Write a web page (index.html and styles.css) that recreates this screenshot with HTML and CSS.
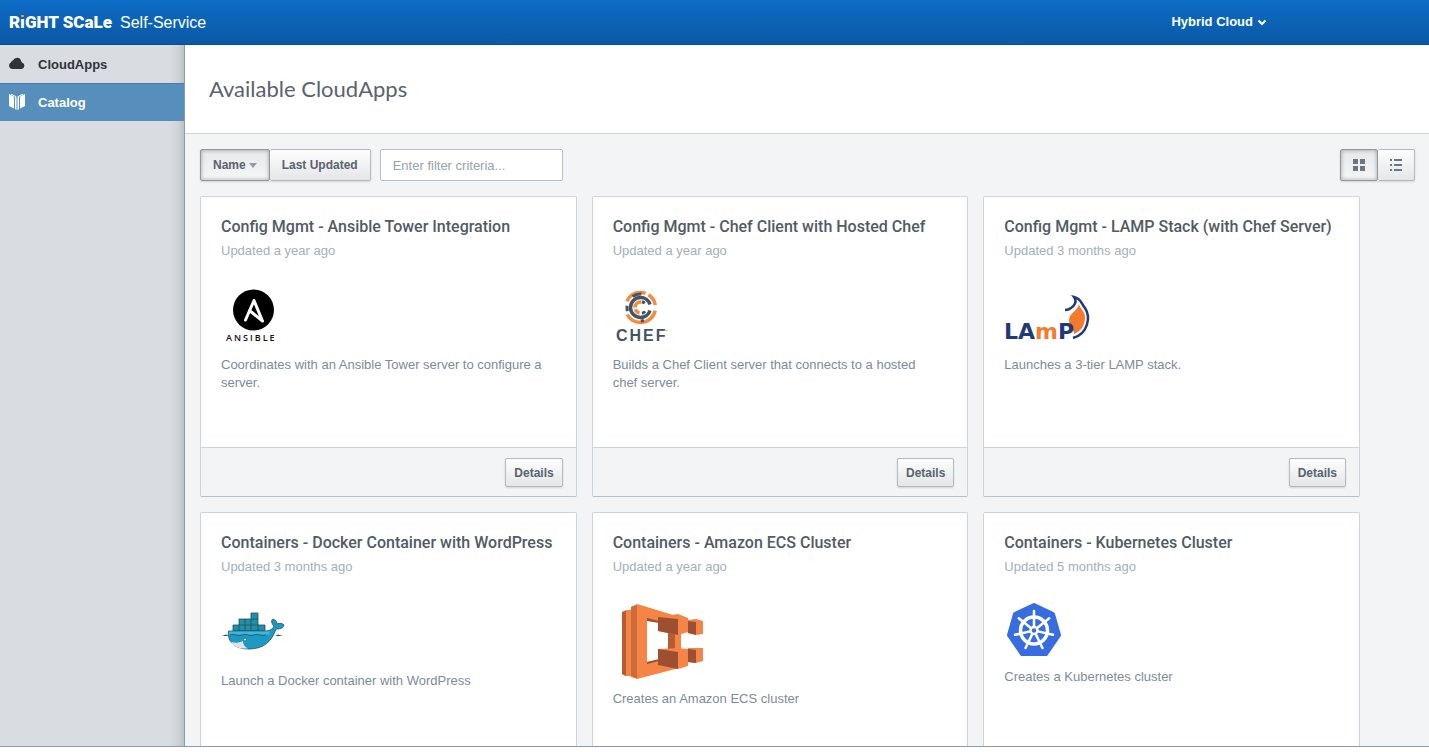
FILE: index.html
```html
<!DOCTYPE html>
<html lang="en">
<head>
<meta charset="utf-8">
<title>RightScale Self-Service</title>
<link rel="stylesheet" href="styles.css">
</head>
<body>
<div class="app">
  <header class="topbar">
    <a class="brand" href="#"><span class="brand-name">R<span class="brand-i">ı</span>GHT SCaLe</span><span class="brand-product">Self-Service</span></a>
    <button class="account" type="button">Hybrid Cloud
      <svg width="10" height="7" viewBox="0 0 10 7" aria-hidden="true"><path d="M1.500 1.500L5 5l3.500-3.500" fill="none" stroke="#fff" stroke-width="2"/></svg>
    </button>
  </header>
  <div class="workspace">
    <nav class="sidebar">
      <a class="nav-item" href="#">
        <svg width="16" height="16" viewBox="0 1 16 16" aria-hidden="true"><path d="M3.500 14A3.500 3.500 0 0 1 2.200 7.300Q2.200 5.600 4.200 5.300A4.100 4.100 0 0 1 12 5.800Q12.400 7.200 13 7.400A3.400 3.400 0 0 1 12.600 14z" fill="#2e3438"/></svg>
        <span>CloudApps</span>
      </a>
      <a class="nav-item current" href="#" aria-current="page">
        <svg width="16" height="16" viewBox="0 1 16 16" aria-hidden="true"><path d="M0 1l5 2.500v12L0 13zM6 4l1.500.800V17L6 16zM8.500 4.800L10 4v12l-1.500 1zM11 3.500L16 1v12l-5 2.500z" fill="#fff"/><path d="M2 1l5.500 3M14 1L8.500 4" stroke="#fff" stroke-width="1"/></svg>
        <span>Catalog</span>
      </a>
    </nav>
    <main class="main">
      <div class="page-head"><h1>Available CloudApps</h1></div>
      <div class="toolbar">
        <div class="group">
          <button class="btn sort pressed" type="button">Name <svg width="8" height="5" viewBox="0 0 8 5" aria-hidden="true"><path d="M0 0h8L4 5z" fill="#929ba4"/></svg></button>
          <button class="btn sort" type="button">Last Updated</button>
        </div>
        <input class="filter" type="text" placeholder="Enter filter criteria..." aria-label="Filter criteria">
        <div class="group views">
          <button class="btn view pressed" type="button" aria-label="Grid view"><svg width="12" height="12" viewBox="0 0 12 12"><path d="M0 0h5v5H0zM7 0h5v5H7zM0 7h5v5H0zM7 7h5v5H7z" fill="#70787f"/></svg></button>
          <button class="btn view" type="button" aria-label="List view"><svg width="12" height="12" viewBox="0 0 12 12"><path d="M0 0h2v2H0zM4 0h8v2H4zM0 5h2v2H0zM4 5h8v2H4zM0 10h2v2H0zM4 10h8v2H4z" fill="#70787f"/></svg></button>
        </div>
      </div>
      <div class="cards">
        <article class="card">
          <div class="card-body">
            <h2>Config Mgmt - Ansible Tower Integration</h2>
            <p class="updated">Updated a year ago</p>
            <svg class="logo" width="64" height="64" viewBox="0 0 64 64" role="img" aria-label="Ansible">
              <circle cx="32.500" cy="28" r="20.500" fill="#000"/>
              <path d="M24.500 38L33 18.500l8.500 20.500L28.500 28.500" fill="none" stroke="#fff" stroke-width="3" stroke-linejoin="round" stroke-linecap="round"/>
              <text class="ansible-word" x="5" y="59">ANSIBLE</text>
            </svg>
            <p class="desc">Coordinates with an Ansible Tower server to configure a server.</p>
          </div>
          <footer class="card-foot"><button class="btn details" type="button">Details</button></footer>
        </article>
        <article class="card">
          <div class="card-body">
            <h2>Config Mgmt - Chef Client with Hosted Chef</h2>
            <p class="updated">Updated a year ago</p>
            <svg class="logo" width="64" height="64" viewBox="0 0 64 64" role="img" aria-label="Chef">
              <g fill="none">
                <circle cx="27.500" cy="25.500" r="15" pathLength="360" stroke="#f58b3f" stroke-width="3.500" stroke-dasharray="0 12 140 53 85 12 48 10"/>
                <circle cx="27.500" cy="25.500" r="13.500" pathLength="360" stroke="#435464" stroke-width="3" stroke-dasharray="0 75 14 75 24 46 40 86"/>
                <circle cx="27.500" cy="25.500" r="10" pathLength="360" stroke="#435464" stroke-width="3.500" stroke-dasharray="0 18 324 18"/>
                <circle cx="27.500" cy="25.500" r="5.500" pathLength="360" stroke="#f58b3f" stroke-width="3.500" stroke-dasharray="0 100 60 20 100 80"/>
                <circle cx="27.500" cy="25.500" r="6" pathLength="360" stroke="#435464" stroke-width="3" stroke-dasharray="0 40 35 210 30 45"/>
                <path d="M28 25.500h16" stroke="#fff" stroke-width="4"/>
              </g>
              <text class="chef-word" x="3" y="59">CHEF</text>
              <text class="chef-mark" x="52" y="50">™</text>
            </svg>
            <p class="desc">Builds a Chef Client server that connects to a hosted chef server.</p>
          </div>
          <footer class="card-foot"><button class="btn details" type="button">Details</button></footer>
        </article>
        <article class="card">
          <div class="card-body">
            <h2>Config Mgmt - LAMP Stack (with Chef Server)</h2>
            <p class="updated">Updated 3 months ago</p>
            <svg class="logo" width="90" height="64" viewBox="0 0 90 64" role="img" aria-label="LAMP">
              <path d="M75 22c1 5 6 7 6 13 0 9-4 14-11 17 0-5-5-8-5-14 0-7 8-8 10-16z" fill="#f47a2d"/>
              <path d="M61 28c5 0 14-6 9-13 8 2 7 7 11 11 6 9 3 26-12 30" fill="none" stroke="#203b7b" stroke-width="2.500"/>
              <text class="lamp-word" x="0" y="57">LA<tspan class="lamp-m">m</tspan>P</text>
            </svg>
            <p class="desc">Launches a 3-tier LAMP stack.</p>
          </div>
          <footer class="card-foot"><button class="btn details" type="button">Details</button></footer>
        </article>
        <article class="card">
          <div class="card-body">
            <h2>Containers - Docker Container with WordPress</h2>
            <p class="updated">Updated 3 months ago</p>
            <svg class="logo" width="64" height="64" viewBox="0 1 64 64" role="img" aria-label="Docker">
              <g stroke="#264d5d" stroke-width=".8">
                <path d="M12 34V28h6V22h12V16h7v12h7v6z" fill="#218fa6"/>
                <path d="M18 28v6M24 22v12M30 22v12M37 28v6M18 28h19M30 22h7" fill="none"/>
                <path d="M7.500 34H43c6 0 9-2 10-5-3-3-3-6-1-7 3 1 4 3 4 5 3-1 5-1 7 1-1 4-5 4-8 4C51 44 43 52 28 52 14 52 6 45 7.500 34z" fill="#1c9ac3"/>
              </g>
              <path d="M8 34.500h41l-1 3H8z" fill="#3cb8da"/>
              <path d="M10 45c5 1 8 1 12-1 0 4 2 6 5 7.500C19 52 13 50 10 45z" fill="#d8e6e9"/>
              <path d="M9 38q3-1.500 6 0t6 0 6 0 6 0 6 0 6 0" fill="none" stroke="#25566a" stroke-width=".8"/>
              <path d="M1 39l4-1.500 3 1.500zM54 39l3-1.500 5 1.500z" fill="#25566a"/>
              <circle cx="24" cy="42.500" r="1.500" fill="#e5e7e3" stroke="#264d5d" stroke-width=".7"/>
            </svg>
            <p class="desc">Launch a Docker container with WordPress</p>
          </div>
        </article>
        <article class="card">
          <div class="card-body">
            <h2>Containers - Amazon ECS Cluster</h2>
            <p class="updated">Updated a year ago</p>
            <svg class="logo" width="100" height="82" viewBox="0 0 100 82" role="img" aria-label="Amazon ECS">
              <path d="M9 14l4-2h5v66h-5l-4-2z" fill="#f58546"/><path d="M9 14l4-1v65l-4-2z" fill="#b85a32"/>
              <path d="M18 9l6-3 46 14v12H55v-6L34 21v43l22-4h14v9L24 81l-6-2z" fill="#f58546"/>
              <path d="M18 9l6-2v73l-6-2z" fill="#cf6a3a"/>
              <path d="M34 20l12 3v2l-12-2zM34 64l12-3v2l-12 3z" fill="#9d5031"/>
              <path d="M55 34h13v17H55z" fill="#b85a32"/><path d="M62 35h6v16h-6z" fill="#f58546"/>
              <path d="M45 19l20-3 10 4v14l-10 3-20-4z" fill="#f58546"/><path d="M45 19l20 2v16l-20-4z" fill="#9d5031"/>
              <path d="M75 22l8-1 7 2v13l-7 1-8-2z" fill="#f58546"/><path d="M75 23l8 1v13l-8-2z" fill="#9d5031"/>
              <path d="M45 51l20-1 10 1v17l-10 3-20-4z" fill="#f58546"/><path d="M45 51l20 3v17l-20-4z" fill="#9d5031"/>
              <path d="M75 50h15v13l-7 2-8-1z" fill="#f58546"/><path d="M75 51l8 1v13l-8-1z" fill="#9d5031"/>
            </svg>
            <p class="desc">Creates an Amazon ECS cluster</p>
          </div>
        </article>
        <article class="card">
          <div class="card-body">
            <h2>Containers - Kubernetes Cluster</h2>
            <p class="updated">Updated 5 months ago</p>
            <svg class="logo" width="60" height="60" viewBox="0 1 60 60" role="img" aria-label="Kubernetes">
              <path d="M30 8l19 9 6 21L42 57H18L5 38l6-21z" fill="#386ce1" stroke="#386ce1" stroke-width="4" stroke-linejoin="round"/>
              <g fill="none" stroke="#fff" stroke-width="2.500">
                <circle cx="30" cy="33.500" r="13.500" stroke-width="3.500"/>
                <path id="spoke" d="M30 29.500V14" stroke-linecap="round"/>
                <use href="#spoke" transform="rotate(51.430 30 33.500)"/>
                <use href="#spoke" transform="rotate(102.860 30 33.500)"/>
                <use href="#spoke" transform="rotate(154.290 30 33.500)"/>
                <use href="#spoke" transform="rotate(205.710 30 33.500)"/>
                <use href="#spoke" transform="rotate(257.140 30 33.500)"/>
                <use href="#spoke" transform="rotate(308.570 30 33.500)"/>
                <circle cx="30" cy="33.500" r="3.500"/>
              </g>
            </svg>
            <p class="desc">Creates a Kubernetes cluster</p>
          </div>
        </article>
      </div>
    </main>
  </div>
</div>
</body>
</html>
```
FILE: styles.css
```css
* { box-sizing: border-box; }
body {
  margin: 0;
  background: #fff;
  color: #7c8b99;
  font: 13px/18px "Liberation Sans", Arial, sans-serif;
}
h1, h2, p { margin: 0; }
a { color: inherit; text-decoration: none; }
button, input { font: inherit; margin: 0; }
svg { display: block; }

.app {
  display: flex;
  flex-direction: column;
  height: calc(100vh - 5px);
  border-bottom: 1px solid #8c9bab;
  overflow: hidden;
}

.topbar {
  display: flex;
  justify-content: space-between;
  align-items: center;
  flex: none;
  height: 45px;
  padding: 0 162px 0 9px;
  background: linear-gradient(#0d6cc6, #0b59a5);
  border-bottom: 1px solid #0a4d8f;
  color: #fff;
}
.brand { display: flex; align-items: baseline; gap: 8px; }
.brand-name { font: 900 17px/20px Roboto, sans-serif; }
.brand-i { position: relative; }
.brand-i::before {
  content: "";
  position: absolute;
  top: 3px;
  left: 1px;
  width: 3px;
  height: 2px;
  background: #f58b3f;
}
.brand-product { font-size: 16px; line-height: 20px; }
.account {
  display: flex;
  align-items: center;
  gap: 4px;
  padding: 0;
  border: 0;
  background: none;
  color: #fff;
  font-weight: bold;
}

.workspace { display: flex; flex: 1; min-height: 0; }
.sidebar {
  flex: none;
  width: 185px;
  border-right: 1px solid #8c9bab;
  background: linear-gradient(to left, #bcc1c6, #d0d4d8 6px, #d9dce1 16px);
}
.nav-item {
  display: flex;
  align-items: center;
  gap: 13px;
  height: 38px;
  padding: 2px 9px 0;
  color: #2e3438;
  font-weight: bold;
}
.nav-item svg { margin-bottom: 2px; }
.nav-item.current {
  background: #568ebc;
  box-shadow: inset 0 1px #4a7ca6;
  color: #fff;
}

.main {
  flex: 1;
  min-width: 0;
  background: #f2f4f6;
  box-shadow: inset 0 1px #dfe3e8;
}
.page-head {
  padding: 29px 24px;
  border-bottom: 1px solid #ced4da;
  background: #fff;
}
h1 {
  color: #59636d;
  font: 400 22px/30px Lato, sans-serif;
}
.toolbar {
  display: flex;
  align-items: flex-start;
  gap: 9px;
  padding: 15px 14px 15px 15px;
}
.group { display: flex; box-shadow: 0 1px 2px #0002; border-radius: 2px; }
.views { margin-left: auto; }
.btn {
  display: flex;
  align-items: center;
  justify-content: center;
  border: 1px solid #b5babf;
  border-radius: 2px;
  background: linear-gradient(#fdfdfd, #e4e6e8);
  color: #59636d;
  font-size: 12px;
  font-weight: bold;
  line-height: 16px;
}
.sort { gap: 3px; height: 32px; padding: 0 12px; }
.view { width: 38px; height: 32px; }
.group .btn + .btn { border-left: 0; }
.view + .view { width: 37px; }
.pressed {
  border-color: #92989e;
  background: linear-gradient(#e6e8ea, #f5f6f7);
  box-shadow: inset 0 0 4px #0005;
}
.filter {
  width: 183px;
  height: 32px;
  padding: 0 12px;
  border: 1px solid #b4c0cc;
  border-radius: 2px;
  background: #fff;
  color: #59636d;
}
.filter::placeholder { color: #96a3af; opacity: 1; }

.cards {
  display: grid;
  grid-template-columns: repeat(3, minmax(0, 1fr));
  gap: 15px;
  padding: 0 69px 15px 15px;
}
.card {
  display: flex;
  flex-direction: column;
  border: 1px solid #ced4dc;
  border-bottom-color: #b4c0cc;
  border-radius: 2px;
  background: #fff;
}
.card-body { min-height: 250px; padding: 19px 20px; }
h2 {
  color: #505b65;
  font: 500 16px/22px Roboto, sans-serif;
  white-space: nowrap;
}
.updated { margin-top: 4px; color: #a3afb9; }
.logo { margin: 22px 0 10px; }
.desc { padding-right: 10px; }
.card-foot {
  display: flex;
  justify-content: flex-end;
  padding: 10px 13px 9px;
  border-top: 1px solid #ced4dc;
  background: #f2f4f6;
}
.details { height: 29px; padding: 0 8px; box-shadow: 0 1px 2px #0002; }

.ansible-word { font: 600 9px "Open Sans", sans-serif; letter-spacing: 2px; fill: #111; }
.chef-word { font: bold 16px "Liberation Sans", sans-serif; letter-spacing: 2px; fill: #435464; }
.chef-mark { font: 3px "Liberation Sans", sans-serif; fill: #435464; }
.lamp-word { font: bold 22px "DejaVu Sans", sans-serif; fill: #203b7b; }
.lamp-m { fill: #f47a2d; }
```
